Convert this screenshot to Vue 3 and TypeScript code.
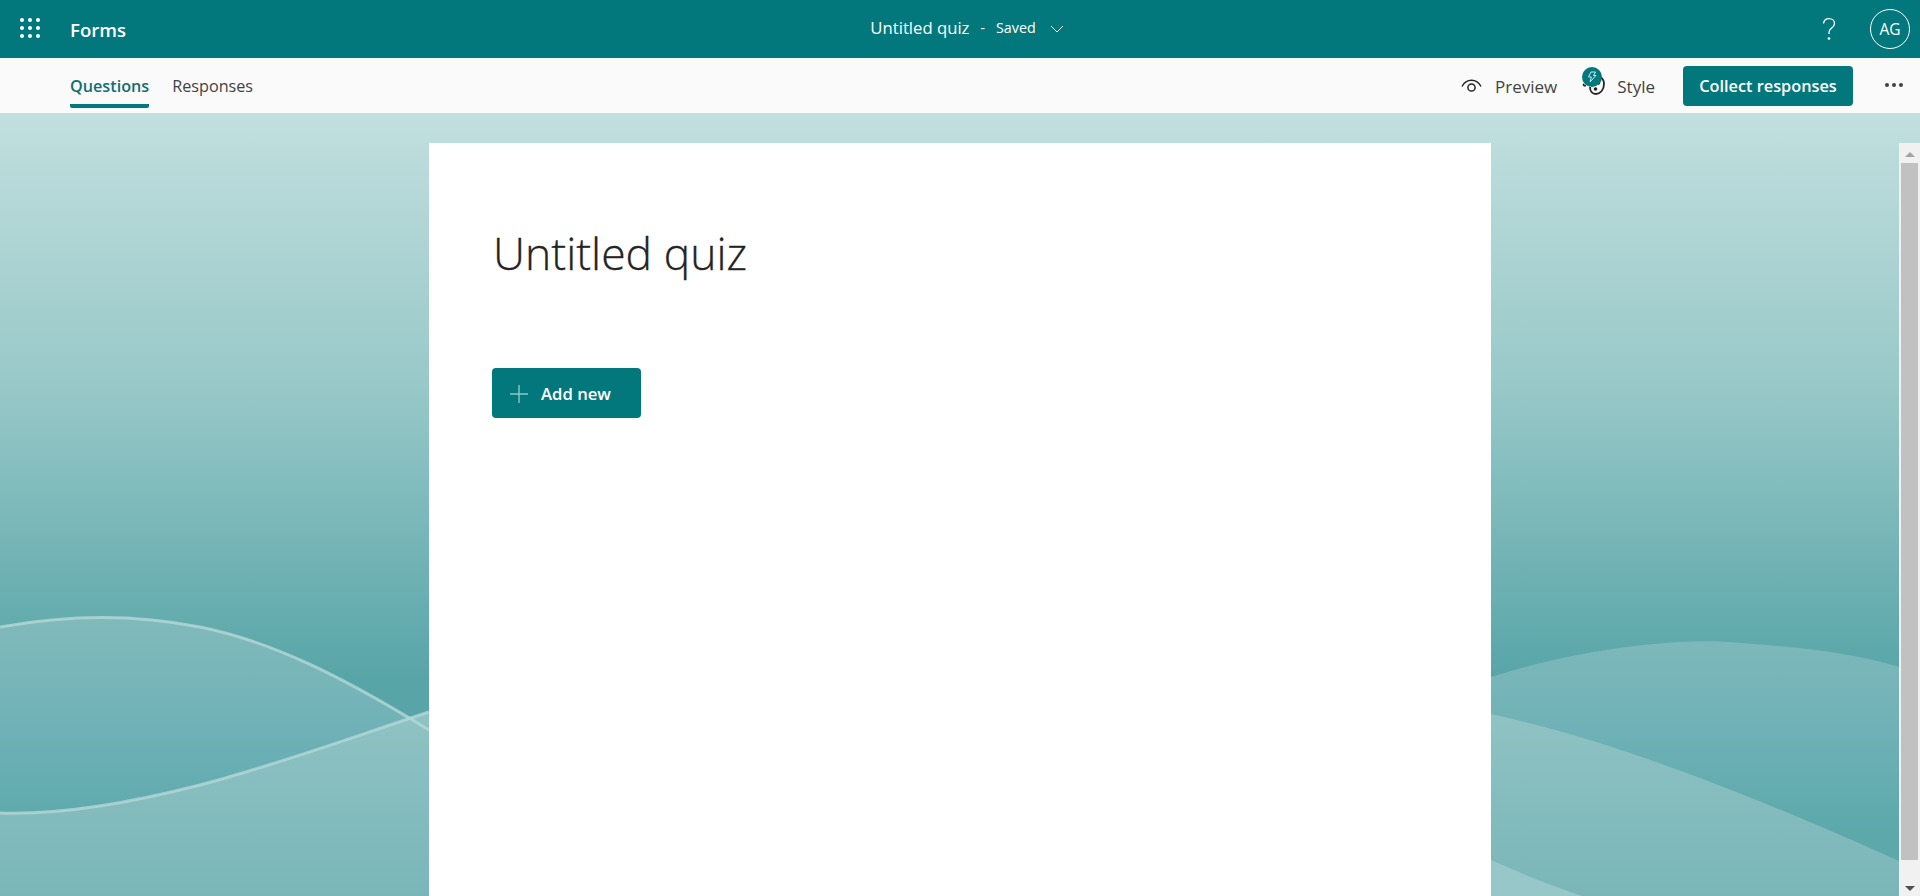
<template>
  <div class="page">
    <header class="top-bar">
      <div class="brand">
        <svg class="waffle" width="20" height="20" viewBox="0 0 20 20" fill="#fff">
          <template v-for="y in [2, 10, 18]" :key="y">
            <circle v-for="x in [2, 10, 18]" :key="x" :cx="x" :cy="y" r="2" />
          </template>
        </svg>
        <span class="app-name">Forms</span>
      </div>
      <div class="doc-title">
        <span class="doc-name">Untitled quiz</span>
        <span class="doc-dash">-</span>
        <span class="doc-state">Saved</span>
        <svg class="chevron" width="14" height="8" viewBox="0 0 14 8" fill="none" stroke="#fff" stroke-width="1">
          <path d="M1 1l6 6 6-6" />
        </svg>
      </div>
      <div class="top-actions">
        <svg class="help" width="16" height="24" viewBox="0 0 16 24" fill="none" stroke="#fff" stroke-width="1.3">
          <path d="M2.500 6.500C3 3.200 5.200 1.600 8 1.600c3.200 0 5.500 2 5.500 4.800 0 2.400-1.400 3.500-2.900 4.700-1.500 1.200-2.600 2.200-2.600 4.600v1.400" />
          <circle cx="8" cy="21.500" r="0.7" fill="#fff" />
        </svg>
        <div class="avatar">AG</div>
      </div>
    </header>

    <nav class="tool-bar">
      <div class="tabs">
        <a class="tab active">Questions</a>
        <a class="tab">Responses</a>
      </div>
      <div class="tools">
        <a class="tool preview">
          <svg width="21" height="14" viewBox="0 0 21 14" fill="none" stroke="#242424" stroke-width="1.5">
            <path d="M1 7.500C3 3.500 6.400 1.200 10.500 1.200S18 3.500 20 7.500" />
            <circle cx="10.500" cy="8.500" r="3.600" />
          </svg>
          <span>Preview</span>
        </a>
        <a class="tool style">
          <span class="style-icon">
            <svg class="palette" width="24" height="24" viewBox="0 0 24 24" fill="none" stroke="#242424" stroke-width="1.800">
              <path d="M2 12c-1 1 0 2 2 1.500" />
              <path d="M12 5c5-2 10 1 10 7 0 6-4 10-8 10-4 0-6-3-6-7" />
              <circle cx="16.500" cy="11" r="1.800" fill="#242424" stroke="none" />
              <circle cx="13.500" cy="17" r="1.800" fill="#242424" stroke="none" />
            </svg>
            <span class="bolt-badge">
              <svg width="10" height="12" viewBox="0 0 10 12" fill="none" stroke="#cfe8e8" stroke-width="1">
                <path d="M4 1h4.500L6.500 4.500h2.500L3 11l1.400-5H1.500z" />
              </svg>
            </span>
          </span>
          <span>Style</span>
        </a>
        <button class="collect">Collect responses</button>
        <span class="more"><i></i><i></i><i></i></span>
      </div>
    </nav>

    <section class="stage">
      <svg class="backdrop" width="1920" height="783" viewBox="0 0 1920 783" preserveAspectRatio="none">
        <defs>
          <linearGradient id="sky" x1="0" y1="0" x2="0" y2="1">
            <stop offset="0" stop-color="#c2dfdf" />
            <stop offset="0.35" stop-color="#98c8c8" />
            <stop offset="0.72" stop-color="#58a5a8" />
            <stop offset="1" stop-color="#58a5a8" />
          </linearGradient>
          <linearGradient id="swell" gradientUnits="userSpaceOnUse" x1="0" y1="500" x2="0" y2="720">
            <stop offset="0" stop-color="#82babb" />
            <stop offset="0.5" stop-color="#70b2b7" />
            <stop offset="1" stop-color="#5ca8ab" />
          </linearGradient>
          <linearGradient id="shore" gradientUnits="userSpaceOnUse" x1="0" y1="590" x2="0" y2="783">
            <stop offset="0" stop-color="#90c3c4" />
            <stop offset="1" stop-color="#7ab6b8" />
          </linearGradient>
        </defs>
        <rect width="1920" height="783" fill="url(#sky)" />
        <!-- left side -->
        <path d="M0 514C60 503 130 500 200 514S340 562 429 617V783H0Z" fill="url(#swell)" />
        <path d="M0 700C60 702 130 690 200 672S350 625 429 599V783H0Z" fill="url(#shore)" />
        <path d="M0 514C60 503 130 500 200 514S340 562 429 617" fill="none" stroke="#b4d8d8" stroke-width="3" stroke-opacity="0.8" />
        <path d="M0 700C60 702 130 690 200 672S350 625 429 599" fill="none" stroke="#b4d8d8" stroke-width="3" stroke-opacity="0.8" />
        <!-- right side -->
        <path d="M1491 564C1580 535 1680 525 1730 529S1850 538 1899 554V783H1491Z" fill="url(#swell)" />
        <path d="M1491 601C1600 625 1720 668 1899 748V783H1491Z" fill="url(#shore)" />
        <path d="M1491 747C1520 760 1550 772 1582 783H1491Z" fill="#97c7c8" />
      </svg>

      <main class="sheet">
        <h1 class="quiz-title">Untitled quiz</h1>
        <button class="add-new">
          <svg width="18" height="18" viewBox="0 0 18 18" stroke="#8fc6c6" stroke-width="1.400">
            <path d="M9 0v18M0 9h18" />
          </svg>
          <span>Add new</span>
        </button>
      </main>

      <div class="scrollbar">
        <span class="arrow up"></span>
        <span class="thumb"></span>
        <span class="arrow down"></span>
      </div>
    </section>
  </div>
</template>

<script setup lang="ts">
// static screen, nothing to wire up
</script>

<style>
html,
body {
  margin: 0;
  overflow: hidden;
}
</style>

<style scoped>
.page {
  display: flex;
  flex-direction: column;
  height: 896px;
  font-family: "Open Sans", "Liberation Sans", sans-serif;
  color: #242424;
}

.top-bar {
  display: grid;
  grid-template-columns: 1fr auto 1fr;
  align-items: center;
  height: 58px;
  padding: 0 10px 0 20px;
  background: #03787c;
  color: #fff;
}

.brand {
  display: flex;
  align-items: center;
  gap: 30px;
}

.waffle {
  margin-bottom: 2px;
}

.app-name {
  font-size: 18.600px;
  font-weight: 600;
}

.doc-title {
  display: flex;
  align-items: center;
  margin-left: 4px;
  margin-bottom: 4px;
}

.doc-name {
  font-size: 16.700px;
}

.doc-dash {
  margin: 0 11px;
  font-size: 14px;
}

.doc-state {
  margin-right: 14px;
  font-size: 14.300px;
}

.chevron {
  margin-top: 4px;
}

.top-actions {
  display: flex;
  align-items: center;
  justify-content: flex-end;
  gap: 33px;
}

.avatar {
  display: flex;
  align-items: center;
  justify-content: center;
  box-sizing: border-box;
  width: 40px;
  height: 40px;
  border: 1px solid #fff;
  border-radius: 50%;
  font-size: 15.500px;
}

.tool-bar {
  display: flex;
  align-items: stretch;
  justify-content: space-between;
  height: 55px;
  padding: 0 16px 0 70px;
  background: #fafafa;
}

.tabs {
  display: flex;
  gap: 23px;
}

.tab {
  display: flex;
  align-items: center;
  box-sizing: border-box;
  height: 50px;
  padding-top: 10px;
  border-bottom: 4px solid transparent;
  border-radius: 0 0 2px 2px;
  font-size: 16.200px;
  color: #424242;
}

.tab.active {
  border-bottom-color: #03787c;
  color: #0f6f73;
  font-weight: 600;
}

.tools {
  display: flex;
  align-items: center;
}

.tool {
  display: flex;
  align-items: center;
  padding-top: 1px;
  font-size: 17px;
  color: #424242;
}

.preview {
  gap: 13px;
  margin-right: 25px;
}

.style {
  gap: 11px;
  margin-right: 28px;
}

.style-icon {
  position: relative;
  display: block;
  width: 24px;
  height: 24px;
}

.palette {
  position: absolute;
  top: -2px;
  left: 0;
}

.bolt-badge {
  position: absolute;
  top: -7px;
  left: 0;
  display: flex;
  align-items: center;
  justify-content: center;
  width: 20px;
  height: 20px;
  border-radius: 50%;
  background: #03787c;
}

.collect {
  width: 170px;
  height: 40px;
  margin-right: 32px;
  padding: 0;
  border: 0;
  border-radius: 4px;
  background: #03787c;
  color: #fff;
  font: 600 16.300px "Open Sans", "Liberation Sans", sans-serif;
}

.more {
  display: flex;
  gap: 3px;
  margin-bottom: 2px;
  margin-right: 1px;
}

.more i {
  width: 4px;
  height: 4px;
  border-radius: 50%;
  background: #424242;
}

.stage {
  position: relative;
  display: flex;
  justify-content: center;
  flex: 1;
  padding-top: 30px;
  overflow: hidden;
}

.backdrop {
  position: absolute;
  top: 0;
  left: 0;
}

.sheet {
  position: relative;
  box-sizing: border-box;
  width: 1062px;
  padding: 80px 0 0 63px;
  background: #fff;
}

.quiz-title {
  margin: 0 0 85px 1px;
  font-size: 44.500px;
  font-weight: 300;
  line-height: 60px;
  color: #242424;
  -webkit-text-stroke: 0.3px #242424;
}

.add-new {
  display: flex;
  align-items: center;
  gap: 13px;
  box-sizing: border-box;
  width: 149px;
  height: 50px;
  padding: 1px 0 0 18px;
  border: 0;
  border-radius: 4px;
  background: #03787c;
  color: #fff;
  font: 600 16.700px "Open Sans", "Liberation Sans", sans-serif;
}

.scrollbar {
  position: absolute;
  top: 30px;
  right: 0;
  bottom: 0;
  display: flex;
  flex-direction: column;
  align-items: center;
  width: 21px;
  background: #f1f1f1;
}

.thumb {
  flex: 1;
  width: 17px;
  margin-bottom: 26px;
  background: #c1c1c1;
}

.arrow {
  flex: none;
  width: 0;
  height: 0;
  border-left: 5px solid transparent;
  border-right: 5px solid transparent;
}

.arrow.up {
  margin: 9px 0 6px;
  border-bottom: 5px solid #a3a3a3;
}

.arrow.down {
  margin-bottom: 5px;
  border-top: 5px solid #505050;
}
</style>
